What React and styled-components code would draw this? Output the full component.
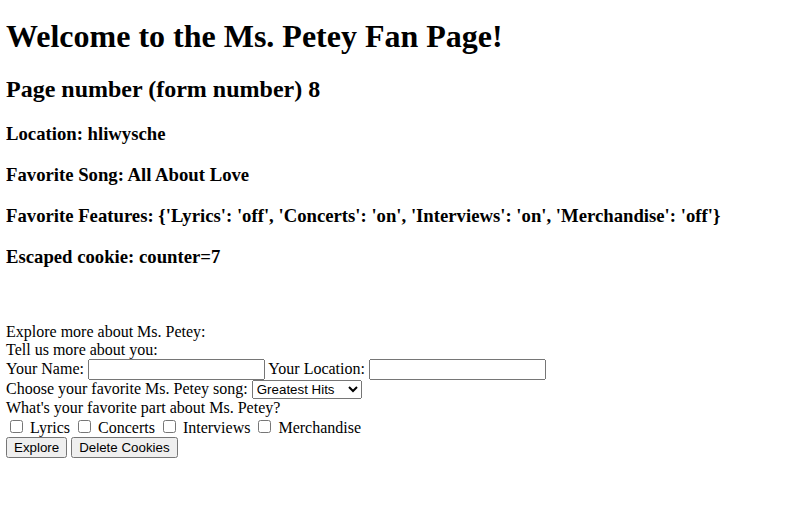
import React from 'react'
import styled, { createGlobalStyle } from 'styled-components'

const GlobalStyle = createGlobalStyle`
  body {
    margin: 0 6px;
    font-family: "Liberation Serif", "Times New Roman", serif;
    font-size: 16px;
    color: #000;
    background: #fff;
  }
  input, select, button {
    font-family: "Liberation Sans", Arial, sans-serif;
    font-size: 13.333px;
  }
`

const Title = styled.h1`
  font-size: 32px;
  margin: 18px 0 21.44px;
`

const SubTitle = styled.h2`
  font-size: 24px;
  margin: 19.92px 0;
`

const Info = styled.h3`
  font-size: 18.72px;
  margin: 18.72px 0;
`

const Spacer = styled.div`
  height: ${({ h }) => h}px;
`

const Form = styled.form`
  margin: 0;
`

const TextInput = styled.input`
  width: 177px;
  box-sizing: border-box;
`

const SongSelect = styled.select`
  width: 110px;
`

const Check = styled.input`
  margin: 3px 3px 3px 4px;
`

const FanPage = () => {
  return (
    <>
      <GlobalStyle />
      <Title>Welcome to the Ms. Petey Fan Page!</Title>
      <SubTitle>Page number (form number) 8</SubTitle>
      <Info>Location: hliwysche</Info>
      <Info>Favorite Song: All About Love</Info>
      <Info>Favorite Features: {"{'Lyrics': 'off', 'Concerts': 'on', 'Interviews': 'on', 'Merchandise': 'off'}"}</Info>
      <Info>Escaped cookie: counter=7</Info>
      <Spacer h={37} />
      <Form onSubmit={(e) => e.preventDefault()}>
        Explore more about Ms. Petey:<br />
        Tell us more about you:<br />
        Your Name: <TextInput type="text" /> Your Location: <TextInput type="text" /><br />
        Choose your favorite Ms. Petey song:{' '}
        <SongSelect defaultValue="Greatest Hits">
          <option>Greatest Hits</option>
          <option>All About Love</option>
        </SongSelect>
        <br />
        What's your favorite part about Ms. Petey?<br />
        <Check type="checkbox" /> Lyrics{' '}
        <Check type="checkbox" /> Concerts{' '}
        <Check type="checkbox" /> Interviews{' '}
        <Check type="checkbox" /> Merchandise
        <br />
        <button type="submit">Explore</button> <button type="button">Delete Cookies</button>
      </Form>
    </>
  )
}

export default FanPage
